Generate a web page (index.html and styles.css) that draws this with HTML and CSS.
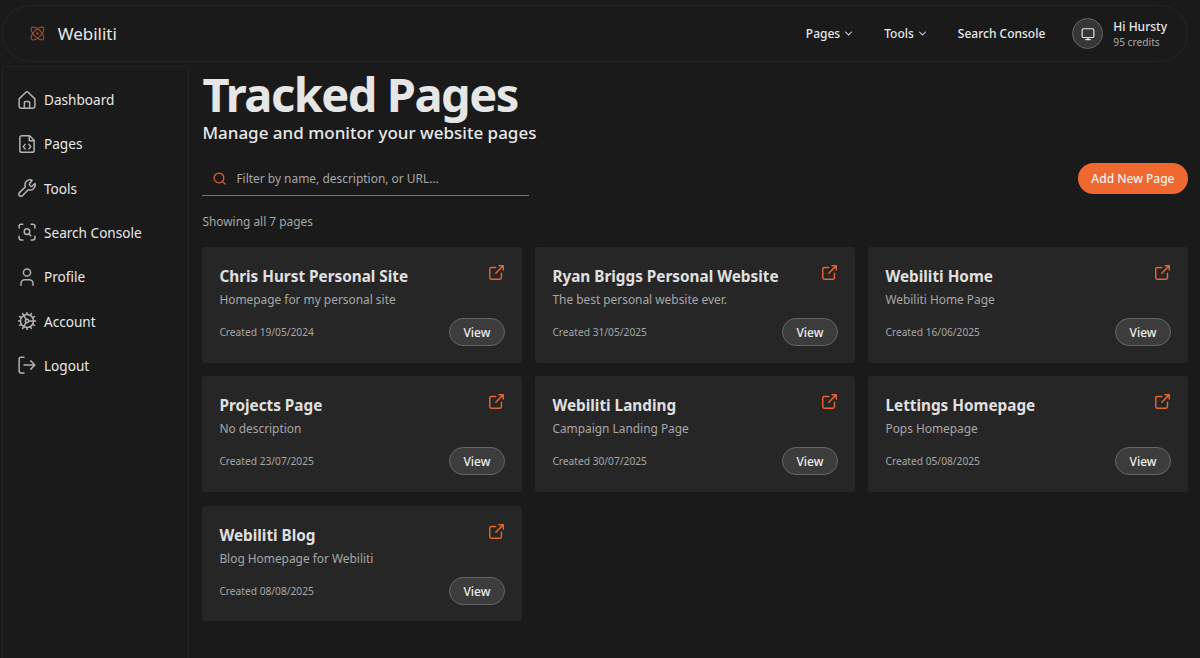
FILE: index.html
```html
<!DOCTYPE html>
<html lang="en">

	<head>
		<meta charset="UTF-8">
		<title>Webiliti - Tracked Pages</title>
		<link rel="stylesheet" href="styles.css">
	</head>

	<body>
		<svg class="sprite">
			<symbol id="chevron" viewBox="0 0 24 24"><path d="M4 8l8 8 8-8" /></symbol>
			<symbol id="link" viewBox="0 0 24 24"><path d="M21 3L11 13M15.500 2.500H21.500V8.500M11 5H4.500A2 2 0 0 0 2.500 7V19.500A2 2 0 0 0 4.500 21.500H17A2 2 0 0 0 19 19.500V13" /></symbol>
		</svg>

		<header class="header">
			<a class="brand">
				<svg class="logo" viewBox="0 0 24 24">
					<circle cx="12" cy="12" r="1" />
					<path d="M20.200 20.200c2.040-2.030.020-7.360-4.500-11.900-4.540-4.520-9.870-6.540-11.900-4.500-2.040 2.030-.020 7.360 4.500 11.900 4.540 4.520 9.870 6.540 11.900 4.500Z" />
					<path d="M15.700 15.700c4.520-4.540 6.540-9.870 4.500-11.900-2.030-2.040-7.360-.020-11.900 4.500-4.520 4.540-6.540 9.870-4.500 11.900 2.030 2.040 7.360.020 11.900-4.500Z" />
				</svg>
				<span>Webiliti</span>
			</a>
			<nav class="topnav">
				<a>Pages <svg class="chev"><use href="#chevron" /></svg></a>
				<a>Tools <svg class="chev"><use href="#chevron" /></svg></a>
				<a>Search Console</a>
			</nav>
			<div class="user">
				<div class="avatar">
					<svg viewBox="0 0 24 24"><rect x="2" y="3" width="20" height="15" rx="2" /><path d="M8 21.500h8M12 18v3.500" /></svg>
				</div>
				<div>
					<div class="hi">Hi Hursty</div>
					<div class="credits">95 credits</div>
				</div>
			</div>
		</header>

		<div class="layout">
			<aside class="sidebar">
				<ul>
					<li>
						<svg viewBox="0 0 24 24"><path d="M1.500 10.500L10.500 1.700a2.200 2.200 0 0 1 3 0L22.500 10.500V20a3 3 0 0 1-3 3h-15a3 3 0 0 1-3-3zM8.500 23v-7.500a1.500 1.500 0 0 1 1.500-1.500h4a1.500 1.500 0 0 1 1.500 1.500V23" /></svg>
						<span>Dashboard</span>
					</li>
					<li>
						<svg viewBox="0 0 24 24"><path d="M15.500 1H5a2.500 2.500 0 0 0-2.500 2.500v17A2.500 2.500 0 0 0 5 23h14a2.500 2.500 0 0 0 2.500-2.500V7zM15 1.500V7.500H21M9.500 12.500L7 15.500l2.500 3M14.500 12.500l2.500 3-2.500 3" /></svg>
						<span>Pages</span>
					</li>
					<li>
						<svg viewBox="0 0 24 24"><path d="M15.500 6.300a1.400 1.400 0 0 0 0 1.800l1.500 1.500a1.400 1.400 0 0 0 1.900 0l3.700-3.600a6.700 6.700 0 0 1-9 8.200l-7.700 8a2.700 2.700 0 0 1-4-4l8-7.700a6.700 6.700 0 0 1 8.800-8.800z" /></svg>
						<span>Tools</span>
					</li>
					<li>
						<svg viewBox="0 0 24 24"><path d="M1.500 6.500V4a2.500 2.500 0 0 1 2.500-2.500h2.500M17.500 1.500H20A2.500 2.500 0 0 1 22.500 4v2.500M22.500 17.500V20a2.500 2.500 0 0 1-2.500 2.500h-2.500M6.500 22.500H4A2.500 2.500 0 0 1 1.500 20v-2.500M14.500 14.500l2.500 2.500" /><circle cx="12" cy="11.500" r="3.700" /></svg>
						<span>Search Console</span>
					</li>
					<li>
						<svg viewBox="0 0 24 24"><circle cx="12" cy="6" r="4.800" /><path d="M4 23v-2.500a5 5 0 0 1 5-5h6a5 5 0 0 1 5 5V23" /></svg>
						<span>Profile</span>
					</li>
					<li>
						<svg viewBox="0 0 24 24"><circle cx="12" cy="12" r="8.700" /><circle cx="12" cy="12" r="2.200" /><path d="M12 3.300V.5M12 23.500v-2.800M3.300 12H.5M23.500 12h-9.300M7.600 4.500L6.200 2M17.800 22l-1.400-2.500M16.400 4.500L17.800 2M10.900 10.100L7.600 4.500M6.200 22l4.700-8.100M4.500 7.600L2 6.200M22 17.800l-2.500-1.400M4.500 16.400L2 17.800M22 6.200l-2.500 1.400" /></svg>
						<span>Account</span>
					</li>
					<li>
						<svg viewBox="0 0 24 24"><path d="M8 1.500H4A2.500 2.500 0 0 0 1.500 4v16A2.500 2.500 0 0 0 4 22.500h4M8 12h14.500M17 6.500l5.500 5.500-5.500 5.500" /></svg>
						<span>Logout</span>
					</li>
				</ul>
			</aside>

			<main class="main">
				<h1>Tracked Pages</h1>
				<h2>Manage and monitor your website pages</h2>

				<div class="toolbar">
					<div class="search">
						<svg viewBox="0 0 24 24"><circle cx="11" cy="11" r="9" /><path d="M17.500 17.500L22.500 22.500" /></svg>
						<span>Filter by name, description, or URL...</span>
					</div>
					<a class="add">Add New Page</a>
				</div>

				<p class="count">Showing all 7 pages</p>

				<div class="cards">
					<div class="card">
						<div class="top"><h3>Chris Hurst Personal Site</h3><svg><use href="#link" /></svg></div>
						<p>Homepage for my personal site</p>
						<div class="bottom"><span>Created 19/05/2024</span><a class="view">View</a></div>
					</div>
					<div class="card">
						<div class="top"><h3>Ryan Briggs Personal Website</h3><svg><use href="#link" /></svg></div>
						<p>The best personal website ever.</p>
						<div class="bottom"><span>Created 31/05/2025</span><a class="view">View</a></div>
					</div>
					<div class="card">
						<div class="top"><h3>Webiliti Home</h3><svg><use href="#link" /></svg></div>
						<p>Webiliti Home Page</p>
						<div class="bottom"><span>Created 16/06/2025</span><a class="view">View</a></div>
					</div>
					<div class="card">
						<div class="top"><h3>Projects Page</h3><svg><use href="#link" /></svg></div>
						<p>No description</p>
						<div class="bottom"><span>Created 23/07/2025</span><a class="view">View</a></div>
					</div>
					<div class="card">
						<div class="top"><h3>Webiliti Landing</h3><svg><use href="#link" /></svg></div>
						<p>Campaign Landing Page</p>
						<div class="bottom"><span>Created 30/07/2025</span><a class="view">View</a></div>
					</div>
					<div class="card">
						<div class="top"><h3>Lettings Homepage</h3><svg><use href="#link" /></svg></div>
						<p>Pops Homepage</p>
						<div class="bottom"><span>Created 05/08/2025</span><a class="view">View</a></div>
					</div>
					<div class="card">
						<div class="top"><h3>Webiliti Blog</h3><svg><use href="#link" /></svg></div>
						<p>Blog Homepage for Webiliti</p>
						<div class="bottom"><span>Created 08/08/2025</span><a class="view">View</a></div>
					</div>
				</div>
			</main>
		</div>
	</body>

</html>
```
FILE: styles.css
```css
* {
	margin: 0;
	padding: 0;
	box-sizing: border-box;
}

body {
	height: 658px;
	overflow: hidden;
	padding: 5px 12px 0 2px;
	background: #1a1a1a;
	color: #e8e8e8;
	font-family: "Noto Sans", sans-serif;
}

ul,
li {
	list-style: none;
}

svg {
	fill: none;
	stroke: currentColor;
	stroke-width: 2;
	stroke-linecap: round;
	stroke-linejoin: round;
	flex: none;
}

.sprite {
	display: none;
}

/* header */
.header {
	height: 57px;
	border: 1px solid #252525;
	border-radius: 29px;
	display: flex;
	align-items: center;
	padding: 0 20px 0 26px;
}

.brand {
	display: flex;
	align-items: center;
	gap: 11.700px;
	font-size: 17px;
	font-weight: 400;
	margin-right: auto;
}

.logo {
	width: 17px;
	height: 17px;
	color: #b04a2c;
	stroke-width: 1.5;
}

.topnav {
	display: flex;
	gap: 31px;
	font-size: 12px;
	font-weight: 500;
}

.topnav a {
	display: flex;
	align-items: center;
	gap: 4px;
}

.chev {
	width: 9px;
	height: 9px;
	stroke-width: 2.8;
}

.user {
	display: flex;
	align-items: center;
	gap: 10px;
	margin-left: 27px;
}

.avatar {
	width: 31px;
	height: 31px;
	border: 1px solid #666;
	border-radius: 50%;
	background: #363636;
	display: flex;
	align-items: center;
	justify-content: center;
}

.avatar svg {
	width: 14px;
	height: 14px;
	stroke-width: 2;
}

.hi {
	font-size: 12px;
	line-height: 16px;
	font-weight: 500;
}

.credits {
	font-size: 10.200px;
	line-height: 14px;
	color: #a8a8a8;
}

/* sidebar */
.layout {
	display: flex;
	margin-top: 4px;
}

.sidebar {
	width: 187px;
	height: 620px;
	flex: none;
	border: 1px solid #242424;
	border-radius: 4px;
	padding: 10.400px 15px;
}

.sidebar li {
	height: 44.300px;
	display: flex;
	align-items: center;
	gap: 8px;
	font-size: 13.600px;
	font-weight: 400;
}

.sidebar svg {
	width: 18px;
	height: 18px;
	color: #b2b2b2;
}

/* content */
.main {
	flex: 1;
	margin-left: 13.400px;
}

h1 {
	font-size: 47px;
	line-height: 56px;
	font-weight: 700;
	letter-spacing: -1.500px;
	color: #e6e6e6;
}

h2 {
	font-size: 17px;
	line-height: 22px;
	font-weight: 500;
}

.toolbar {
	display: flex;
	justify-content: space-between;
	align-items: center;
	margin-top: 18px;
}

.search {
	width: 327px;
	height: 34px;
	border-bottom: 1px solid #777;
	display: flex;
	align-items: center;
	gap: 10.500px;
	padding-left: 10.500px;
	font-size: 11.950px;
	color: #a6a6a6;
}

.search svg {
	width: 13px;
	height: 13px;
	color: #e8652d;
	stroke-width: 2.200;
}

.add {
	height: 31px;
	line-height: 32px;
	padding: 0 13.500px;
	margin-bottom: 1px;
	border-radius: 16px;
	background: #ee6830;
	color: #f5f0ee;
	font-size: 12px;
	font-weight: 500;
}

.count {
	margin-top: 16px;
	font-size: 11.900px;
	line-height: 18px;
	color: #a6a6a6;
}

.cards {
	display: grid;
	grid-template-columns: repeat(3, 1fr);
	gap: 13.500px;
	margin-top: 17px;
}

.card {
	height: 115.800px;
	border-radius: 3px;
	background: #262626;
	padding: 17px;
}

.card .top {
	height: 24px;
	display: flex;
	justify-content: space-between;
}

.card h3 {
	font-size: 15.300px;
	line-height: 24px;
	font-weight: 700;
	color: #e0e0e0;
}

.card .top svg {
	width: 17px;
	height: 17px;
	color: #e8652d;
}

.card p {
	font-size: 11.900px;
	line-height: 18px;
	margin-top: 2px;
	color: #a6a6a6;
}

.bottom {
	display: flex;
	justify-content: space-between;
	align-items: center;
	margin-top: 10px;
	font-size: 10.200px;
	color: #a6a6a6;
}

.view {
	width: 56px;
	height: 28px;
	line-height: 27px;
	text-align: center;
	border: 1px solid #666;
	border-radius: 14px;
	background: #3c3c3c;
	color: #eee;
	font-size: 12px;
	font-weight: 500;
}
```
